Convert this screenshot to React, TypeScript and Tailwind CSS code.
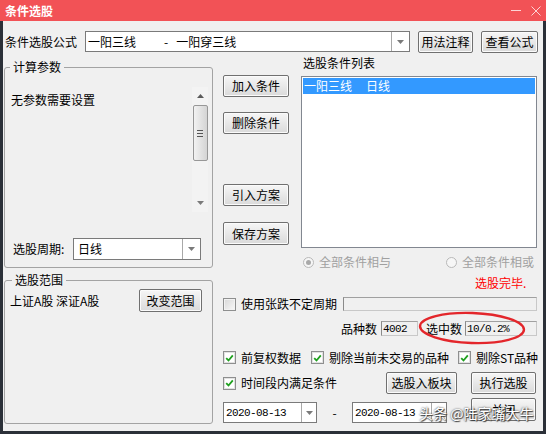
import type { ReactNode } from 'react';

function Btn({ children, className = '' }: { children: ReactNode; className?: string }) {
  return (
    <button
      type="button"
      className={`flex shrink-0 items-center justify-center rounded-[2px] border border-[#707070] bg-linear-to-b from-[#f6f6f6] to-[#dadada] shadow-[inset_0_0_0_1px_#fbfbfb] leading-[14px] text-black ${className}`}
    >
      {children}
    </button>
  );
}

function DownArrow() {
  return (
    <svg width="7" height="4" viewBox="0 0 7 4" aria-hidden="true">
      <path d="M0 0h7L3.5 4z" fill="#7a7a7a" />
    </svg>
  );
}

function UpArrow() {
  return (
    <svg width="7" height="4" viewBox="0 0 7 4" aria-hidden="true">
      <path d="M0 4h7L3.5 0z" fill="#5a5a5a" />
    </svg>
  );
}

function Combo({
  children,
  className = '',
  dropW = 'w-[18px]',
}: {
  children: ReactNode;
  className?: string;
  dropW?: string;
}) {
  return (
    <div className={`flex shrink-0 border border-[#7a7a7a] bg-white ${className}`}>
      <div className="flex flex-1 items-center overflow-hidden whitespace-nowrap pl-[2px]">{children}</div>
      <div className={`flex items-center justify-center border-l border-[#a8a8a8] ${dropW}`}>
        <DownArrow />
      </div>
    </div>
  );
}

function Check({ checked = false }: { checked?: boolean }) {
  return (
    <span
      className={`flex h-[13px] w-[13px] shrink-0 items-center justify-center border border-[#8e8f8f] ${
        checked
          ? 'bg-white shadow-[inset_0_0_0_1px_#e2e2e2]'
          : 'bg-linear-to-br from-[#d8d8d8] to-[#f8f8f8] shadow-[inset_0_0_0_1px_#f2f2f2]'
      }`}
    >
      {checked ? (
        <svg width="9" height="8" viewBox="0 0 9 8" aria-hidden="true">
          <path d="M1.2 4.2l2.3 2.3L7.8 1.4" stroke="#1fa01f" strokeWidth="1.8" fill="none" />
        </svg>
      ) : null}
    </span>
  );
}

function Radio({ on = false }: { on?: boolean }) {
  return (
    <span className="flex h-[11px] w-[11px] shrink-0 items-center justify-center rounded-full border border-[#b9b9b9] bg-[#f6f6f6]">
      {on ? <span className="h-[5px] w-[5px] rounded-full bg-[#a9a9a9]" /> : null}
    </span>
  );
}

function Field({ children, className = '' }: { children?: ReactNode; className?: string }) {
  return (
    <div
      className={`flex shrink-0 items-center overflow-hidden whitespace-nowrap border border-[#c8c8c8] border-l-[#8a8a8a] border-t-[#a0a0a0] bg-[#f0f0f0] pl-[1px] ${className}`}
    >
      {children}
    </div>
  );
}

function VScroll({ className = '' }: { className?: string }) {
  return (
    <div className={`flex h-[125px] w-[16px] shrink-0 flex-col items-center bg-[#f3f3f3] ${className}`}>
      <div className="flex h-[18px] items-center justify-center">
        <UpArrow />
      </div>
      <div className="flex h-[56px] w-[15px] flex-col items-center justify-center gap-[2px] rounded-[2px] border border-[#979797] bg-linear-to-r from-[#f2f2f2] to-[#d4d4d4]">
        <span className="h-px w-[6px] bg-[#555]" />
        <span className="h-px w-[6px] bg-[#555]" />
        <span className="h-px w-[6px] bg-[#555]" />
      </div>
      <div className="flex-1" />
      <div className="flex h-[18px] items-center justify-center">
        <DownArrow />
      </div>
    </div>
  );
}

const MONO = "font-['Liberation_Mono',monospace] text-[11px] tracking-[-0.6px]";

export default function App() {
  return (
    <div className="relative flex h-[434px] w-[546px] flex-col overflow-hidden whitespace-nowrap bg-[#f0f0f0] font-['Noto_Sans_CJK_SC','Liberation_Sans',sans-serif] text-[12px] leading-[14px] text-black">
      {/* title bar */}
      <div className="flex h-[21px] shrink-0 items-center bg-[#f25256] pl-[5px] pr-[5px]">
        <span className="font-bold text-white">条件选股</span>
        <div className="ml-auto flex items-center gap-[10px]">
          <svg width="10" height="10" viewBox="0 0 10 10" aria-hidden="true">
            <path d="M0 4.5h10" stroke="#fcd4d5" />
          </svg>
          <svg width="10" height="10" viewBox="0 0 10 10" aria-hidden="true">
            <path d="M0.5 0.5l9 9M9.5 0.5l-9 9" stroke="#fcd4d5" />
          </svg>
        </div>
      </div>

      <div className="flex flex-1 flex-col border-x-[3px] border-b-[3px] border-[#2b3038]">
        {/* formula row */}
        <div className="mt-[10px] flex h-[22px] items-start pl-[2px]">
          <span className="w-[72px] self-center">条件选股公式</span>
          <Combo className="ml-[8px] h-[21px] w-[325px]">
            <span>一阳三线</span>
            <span className="ml-[28px]">-</span>
            <span className="ml-[8px]">一阳穿三线</span>
          </Combo>
          <Btn className="ml-[8px] h-[22px] w-[55px]">用法注释</Btn>
          <Btn className="ml-[8px] h-[22px] w-[57px]">查看公式</Btn>
        </div>

        <div className="flex items-start">
          {/* left column */}
          <div className="ml-[1px] flex w-[209px] shrink-0 flex-col">
            <fieldset className="mt-[8px] h-[207px] rounded-[3px] border border-[#a3a3a3]">
              <legend className="ml-[5px] px-[3px] leading-[12px]">计算参数</legend>
              <div className="flex">
                <div className="flex-1 pl-[6px] pt-[20px]">无参数需要设置</div>
                <VScroll className="mr-[4px] mt-[14px]" />
              </div>
              <div className="mt-[26px] flex items-center pl-[8px]">
                <span className="w-[60px]">选股周期:</span>
                <Combo className="h-[22px] w-[128px]">
                  <span className="pl-[2px]">日线</span>
                </Combo>
              </div>
            </fieldset>

            <fieldset className="mt-[6px] h-[150px] rounded-[3px] border border-[#a3a3a3]">
              <legend className="ml-[7px] px-[3px] leading-[12px]">选股范围</legend>
              <div className="mt-[3px] flex items-center justify-between pl-[5px] pr-[10px]">
                <span>上证A股 深证A股</span>
                <Btn className="h-[23px] w-[63px]">改变范围</Btn>
              </div>
            </fieldset>
          </div>

          {/* right area */}
          <div className="ml-[10px] flex w-[315px] shrink-0 flex-col">
            <div className="flex h-[243px]">
              <div className="flex w-[66px] shrink-0 flex-col">
                <Btn className="mt-[22px] h-[22px] w-[66px]">加入条件</Btn>
                <Btn className="mt-[15px] h-[22px] w-[66px]">删除条件</Btn>
                <Btn className="mt-[50px] h-[22px] w-[66px]">引入方案</Btn>
                <Btn className="mt-[16px] h-[23px] w-[66px]">保存方案</Btn>
              </div>

              <div className="ml-[12px] flex w-[236px] shrink-0 flex-col">
                <div className="mt-[3px] pl-[2px]">选股条件列表</div>
                <div className="mt-[6px] h-[172px] border border-[#828790] bg-white p-[1px]">
                  <div className="flex h-[16px] items-center bg-[#3399ff] pl-[1px] text-white">
                    <span>一阳三线</span>
                    <span className="ml-[14px]">日线</span>
                  </div>
                </div>
                <div className="mt-[8px] flex h-[12px] items-center text-[#a0a0a0]">
                  <span className="ml-[2px]">
                    <Radio on />
                  </span>
                  <span className="ml-[5px]">全部条件相与</span>
                  <span className="ml-[55px]">
                    <Radio />
                  </span>
                  <span className="ml-[5px]">全部条件相或</span>
                </div>
                <div className="mt-[8px] pl-[174px] text-[#ff0000]">选股完毕.</div>
              </div>
            </div>

            <div className="flex flex-col">
              <div className="mt-[1px] flex h-[14px] items-center">
                <Check />
                <span className="ml-[5px] w-[96px] shrink-0">使用张跌不定周期</span>
                <Field className="ml-[6px] h-[14px] w-[194px] border-[#c8c8c8]" />
              </div>

              <div className="mt-[10px] flex h-[15px] items-center pl-[118px]">
                <span className="w-[36px] shrink-0">品种数</span>
                <Field className={`ml-[4px] h-[15px] w-[37px] ${MONO}`}>4002</Field>
                <span className="ml-[8px] w-[36px] shrink-0">选中数</span>
                <Field className={`ml-[3px] h-[15px] w-[72px] ${MONO}`}>10/0.2%</Field>
              </div>

              <div className="mt-[15px] flex h-[13px] items-center">
                <Check checked />
                <span className="ml-[5px] shrink-0">前复权数据</span>
                <span className="ml-[10px] shrink-0">
                  <Check checked />
                </span>
                <span className="ml-[5px] shrink-0">剔除当前未交易的品种</span>
                <span className="ml-[9px] shrink-0">
                  <Check checked />
                </span>
                <span className="ml-[5px] shrink-0">剔除ST品种</span>
              </div>

              <div className="mt-[8px] flex h-[22px] items-center">
                <Check checked />
                <span className="ml-[5px] w-[96px] shrink-0">时间段内满足条件</span>
                <Btn className="ml-[49px] h-[22px] w-[71px]">选股入板块</Btn>
                <Btn className="ml-[14px] h-[22px] w-[65px]">执行选股</Btn>
              </div>

              <div className="mt-[4px] flex items-start">
                <Combo className="mt-[4px] h-[21px] w-[94px]" dropW="w-[15px]">
                  <span className={MONO}>2020-08-13</span>
                </Combo>
                <div className="mt-[4px] flex h-[21px] w-[35px] shrink-0 items-center justify-center">-</div>
                <Combo className="mt-[4px] h-[21px] w-[95px]" dropW="w-[15px]">
                  <span className={MONO}>2020-08-13</span>
                </Combo>
                <Btn className="ml-[24px] h-[23px] w-[65px]">关闭</Btn>
              </div>
            </div>
          </div>
        </div>
      </div>

      {/* red hand-drawn ellipse */}
      <svg
        className="pointer-events-none absolute left-[414px] top-[307px]"
        width="116"
        height="42"
        viewBox="0 0 116 42"
        aria-hidden="true"
      >
        <ellipse cx="58" cy="21" rx="52" ry="15" transform="rotate(2 58 21)" fill="none" stroke="#e3262b" strokeWidth="2.4" />
      </svg>

      {/* watermark */}
      <div className="pointer-events-none absolute left-[419px] top-[404px] whitespace-nowrap text-[14px] leading-[18px] text-white [text-shadow:0_0_2px_#222,1px_1px_1px_#444]">
        头条 @陆家嘴大牛
      </div>
    </div>
  );
}
